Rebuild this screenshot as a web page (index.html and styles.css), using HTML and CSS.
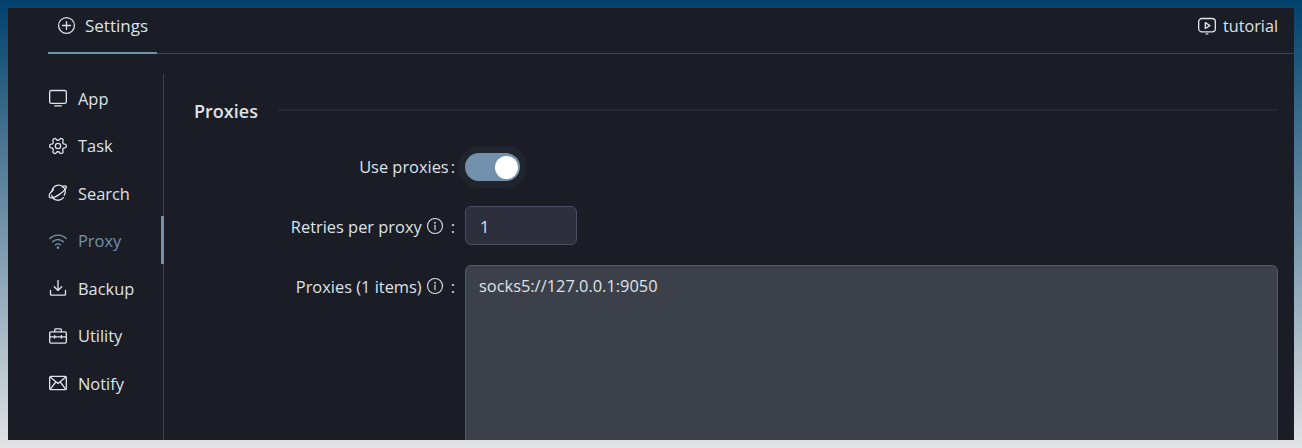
FILE: index.html
```html
<!DOCTYPE html>
<html lang="en">
<head>
    <meta charset="UTF-8">
    <title>Settings</title>
    <link rel="stylesheet" href="styles.css">
</head>
<body>
    <div class="window">
        <div class="tabs">
            <div class="tab">
                <svg class="icon icon-tab" viewBox="0 0 24 24"><circle cx="12" cy="12" r="10"/><path d="M12 7v10M7 12h10"/></svg>
                <span>Settings</span>
            </div>
            <div class="tutorial">
                <svg class="icon" viewBox="0 0 24 24"><rect x="2" y="3" width="20" height="16" rx="4"/><path d="M10 8v7l5.500-3.500z"/><path d="M11 21.500h2"/></svg>
                <span>tutorial</span>
            </div>
        </div>
        <div class="main">
            <nav class="sidebar">
                <div class="nav-item">
                    <svg class="icon" viewBox="0 0 24 24"><rect x="2" y="3" width="20" height="15.500" rx="2"/><path d="M8 21.500h8"/></svg>
                    <span>App</span>
                </div>
                <div class="nav-item">
                    <svg class="icon" viewBox="0 0 24 24"><path transform="rotate(90 12 12)" d="M12.220 2h-.44a2 2 0 0 0-2 2v.18a2 2 0 0 1-1 1.730l-.43.25a2 2 0 0 1-2 0l-.15-.08a2 2 0 0 0-2.730.73l-.22.38a2 2 0 0 0 .73 2.730l.15.1a2 2 0 0 1 1 1.720v.51a2 2 0 0 1-1 1.740l-.15.09a2 2 0 0 0-.73 2.730l.22.38a2 2 0 0 0 2.730.73l.15-.08a2 2 0 0 1 2 0l.43.25a2 2 0 0 1 1 1.730V20a2 2 0 0 0 2 2h.44a2 2 0 0 0 2-2v-.18a2 2 0 0 1 1-1.730l.43-.25a2 2 0 0 1 2 0l.15.08a2 2 0 0 0 2.730-.73l.22-.39a2 2 0 0 0-.73-2.730l-.15-.08a2 2 0 0 1-1-1.740v-.5a2 2 0 0 1 1-1.740l.15-.09a2 2 0 0 0 .73-2.730l-.22-.38a2 2 0 0 0-2.730-.73l-.15.08a2 2 0 0 1-2 0l-.43-.25a2 2 0 0 1-1-1.730V4a2 2 0 0 0-2-2z"/><circle cx="12" cy="12" r="3.200"/></svg>
                    <span>Task</span>
                </div>
                <div class="nav-item">
                    <svg class="icon" viewBox="0 0 24 24"><path d="M5 9a8 8 0 0 1 14-3.500 8 8 0 0 1 .5 9"/><path d="M6.500 8C3 11 .8 15 1.800 17c1.200 2 6.500.5 11.500-3S22.500 6 22 4.500C21.500 3 19 3 17 4.500"/><path d="M4.500 15a8 8 0 0 0 14 2.500"/></svg>
                    <span>Search</span>
                </div>
                <div class="nav-item nav-active">
                    <svg class="icon" viewBox="0 0 24 24"><path d="M2 9c6-5.500 14-5.500 20 0"/><path d="M5.500 13c4-3.500 9-3.500 13 0"/><path d="M9 16.500c2-1.500 4-1.500 6 0"/><circle cx="12" cy="20" r=".8"/></svg>
                    <span>Proxy</span>
                </div>
                <div class="nav-item">
                    <svg class="icon" viewBox="0 0 24 24"><path d="M12 3v12M7.500 10.500 12 15l4.500-4.500"/><path d="M3 15v4.500a1 1 0 0 0 1 1h16a1 1 0 0 0 1-1V15"/></svg>
                    <span>Backup</span>
                </div>
                <div class="nav-item">
                    <svg class="icon" viewBox="0 0 24 24"><rect x="2" y="7" width="20" height="13.500" rx="1.500"/><path d="M8 7V4.500A1 1 0 0 1 9 3.500h6a1 1 0 0 1 1 1V7"/><path d="M2 13h20M8 11.500v3M16 11.500v3"/></svg>
                    <span>Utility</span>
                </div>
                <div class="nav-item">
                    <svg class="icon" viewBox="0 0 24 24"><rect x="2" y="4" width="20" height="16" rx="1.500"/><path d="M3 5l9 7.500L21 5M3 19l6.500-8.500M21 19l-6.500-8.500"/></svg>
                    <span>Notify</span>
                </div>
                <div class="nav-bar"></div>
            </nav>
            <div class="content">
                <div class="section-title">
                    <h2>Proxies</h2>
                    <div class="section-line"></div>
                </div>
                <div class="form-row row-switch">
                    <label class="form-label label-switch"><span>Use proxies</span><span class="colon">:</span></label>
                    <div class="switch"><div class="switch-thumb"></div></div>
                </div>
                <div class="form-row row-input">
                    <label class="form-label">
                        <span>Retries per proxy</span>
                        <svg class="info" viewBox="0 0 24 24"><circle cx="12" cy="12" r="10"/><path d="M12 11v6"/><path d="M12 7v1.500"/></svg>
                        <span class="colon colon-wide">:</span>
                    </label>
                    <div class="number-input">1</div>
                </div>
                <div class="form-row row-text">
                    <label class="form-label">
                        <span>Proxies (1 items)</span>
                        <svg class="info" viewBox="0 0 24 24"><circle cx="12" cy="12" r="10"/><path d="M12 11v6"/><path d="M12 7v1.500"/></svg>
                        <span class="colon colon-wide">:</span>
                    </label>
                    <div class="textarea">socks5://127.0.0.1:9050</div>
                </div>
            </div>
        </div>
    </div>
</body>
</html>
```

FILE: styles.css
```css
html, body {
    height: 448px;
    margin: 0;
    overflow: hidden;
}
body {
    background: linear-gradient(180deg, #00416c 0%, #e2e3e5 100%);
    font-family: "Open Sans", "Noto Sans", Arial, sans-serif;
    font-size: 16.4px;
    color: #dfe2e8;
    padding: 8px;
    box-sizing: border-box;
}
.window {
    background-color: #1a1d25;
    height: 432px;
    overflow: hidden;
}
.icon {
    width: 20px;
    height: 20px;
    fill: none;
    stroke: currentColor;
    stroke-width: 1.600;
    stroke-linecap: round;
    stroke-linejoin: round;
    flex-shrink: 0;
}
.icon-tab {
    width: 19px;
    height: 19px;
}
.tabs {
    display: flex;
    justify-content: space-between;
    align-items: stretch;
    height: 45px;
    margin-left: 40px;
    border-bottom: 1px solid #3e404d;
    padding-right: 16px;
}
.tab {
    display: flex;
    align-items: center;
    gap: 9px;
    width: 109px;
    padding: 0 0 9px 9px;
    box-sizing: border-box;
    height: 46px;
    font-size: 17px;
    border-bottom: 2px solid #7391ad;
}
.tutorial {
    display: flex;
    align-items: center;
    gap: 6px;
    padding-bottom: 9px;
    font-size: 16.200px;
}
.main {
    display: flex;
    margin-top: 20px;
    height: 367px;
}
.sidebar {
    position: relative;
    width: 115px;
    margin-left: 40px;
    padding-top: 0.700px;
    border-right: 1px solid #3e404d;
}
.nav-item {
    display: flex;
    align-items: center;
    gap: 10px;
    height: 47.500px;
}
.nav-active {
    color: #7391ad;
}
.nav-bar {
    position: absolute;
    right: -1px;
    top: 142px;
    width: 3px;
    height: 48px;
    background-color: #7391ad;
}
.content {
    flex: 1;
    padding: 24px 16px 0 30px;
}
.section-title {
    display: flex;
    align-items: center;
    gap: 20px;
    height: 26px;
}
.section-title h2 {
    margin: 0;
    font-size: 18px;
    font-weight: 600;
}
.section-line {
    flex: 1;
    height: 2px;
    margin-top: -3px;
    background-color: #262932;
}
.form-row {
    display: flex;
    gap: 10px;
}
.form-label {
    display: flex;
    justify-content: flex-end;
    align-items: center;
    width: 261px;
}
.label-switch {
    padding-bottom: 2px;
    box-sizing: border-box;
}
.colon {
    margin-left: 2px;
}
.colon-wide {
    margin-left: 7px;
}
.info {
    width: 18px;
    height: 18px;
    margin-left: 4px;
    fill: none;
    stroke: currentColor;
    stroke-width: 1.500;
    stroke-linecap: round;
}
.row-switch {
    margin-top: 29px;
    height: 28px;
}
.switch {
    position: relative;
    width: 55px;
    height: 28px;
    border-radius: 14px;
    background-color: #7391ad;
    box-shadow: 0 0 0 7px #20242d;
}
.switch-thumb {
    position: absolute;
    right: 2px;
    top: 3px;
    width: 23px;
    height: 23px;
    border-radius: 50%;
    background-color: #fff;
}
.row-input {
    margin-top: 25px;
    height: 39px;
    padding-top: 0;
}
.row-input .form-label {
    padding-top: 1px;
    box-sizing: border-box;
}
.number-input {
    width: 112px;
    height: 39px;
    box-sizing: border-box;
    padding: 1px 14px 0;
    display: flex;
    align-items: center;
    background-color: #2d303c;
    border: 1px solid #4a4e60;
    border-radius: 6px;
}
.row-text {
    margin-top: 20px;
}
.row-text .form-label {
    height: 42px;
}
.textarea {
    flex: 1;
    height: 300px;
    box-sizing: border-box;
    padding: 8px 13px;
    background-color: #3c404b;
    border: 1px solid #555968;
    border-radius: 6px;
}
```
